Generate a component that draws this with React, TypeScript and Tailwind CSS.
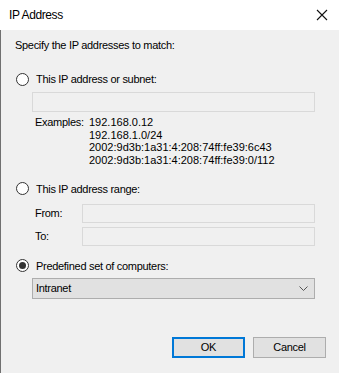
import React from 'react';

const Radio: React.FC<{ checked?: boolean }> = ({ checked }) => (
    <span className="w-[13px] h-[13px] rounded-full border border-[#333333] bg-white flex items-center justify-center shrink-0">
        {checked && <span className="w-[7px] h-[7px] rounded-full bg-[#333333]" />}
    </span>
);

const App: React.FC = () => {
    return (
        <div className="w-[339px] h-[373px] flex flex-col bg-white text-[11px] text-black font-['Liberation_Sans',Arial,sans-serif] overflow-hidden">
            <div className="h-[30px] flex items-center justify-between pl-[9px] pr-[10px] bg-white shrink-0">
                <span className="leading-none text-[12px] tracking-[-0.4px]">IP Address</span>
                <svg width="12" height="12" viewBox="0 0 12 12" className="mr-[1px]">
                    <path d="M1 1 L11 11 M11 1 L1 11" stroke="#111111" strokeWidth="1.1" />
                </svg>
            </div>
            <div className="flex-1 bg-[#f0f0f0] border-l border-[#707070] flex flex-col pl-[14px] pr-[24px] tracking-[-0.3px]">
                <div className="h-[14px] mt-[8px] flex items-center">Specify the IP addresses to match:</div>

                <div className="h-[14px] mt-[20px] flex items-center gap-[7px] ml-[1px]">
                    <Radio />
                    <span>This IP address or subnet:</span>
                </div>
                <div className="ml-[17px] mt-[6px] h-[20px] border border-[#d9d9d9] bg-[#f0f0f0]" />
                <div className="ml-[20px] mt-[4px] flex leading-[12.7px]">
                    <span className="w-[54px] shrink-0 whitespace-nowrap">Examples:</span>
                    <div className="flex flex-col tracking-normal">
                        <span>192.168.0.12</span>
                        <span>192.168.1.0/24</span>
                        <span>2002:9d3b:1a31:4:208:74ff:fe39:6c43</span>
                        <span>2002:9d3b:1a31:4:208:74ff:fe39:0/112</span>
                    </div>
                </div>

                <div className="h-[14px] mt-[15px] flex items-center gap-[7px] ml-[1px]">
                    <Radio />
                    <span>This IP address range:</span>
                </div>
                <div className="ml-[20px] mt-[8px] flex items-center">
                    <span className="w-[47px]">From:</span>
                    <div className="flex-1 h-[19px] border border-[#d9d9d9] bg-[#f0f0f0]" />
                </div>
                <div className="ml-[20px] mt-[4px] flex items-center">
                    <span className="w-[47px]">To:</span>
                    <div className="flex-1 h-[19px] border border-[#d9d9d9] bg-[#f0f0f0]" />
                </div>

                <div className="h-[14px] mt-[13px] flex items-center gap-[7px] ml-[1px]">
                    <Radio checked />
                    <span>Predefined set of computers:</span>
                </div>
                <div className="ml-[17px] mt-[5px] h-[21px] border border-[#adadad] bg-[#e1e1e1] flex items-center justify-between pl-[3px] pr-[6px]">
                    <span>Intranet</span>
                    <svg width="9" height="5" viewBox="0 0 9 5">
                        <path d="M0.5 0.5 L4.5 4.5 L8.5 0.5" stroke="#555555" strokeWidth="1" fill="none" />
                    </svg>
                </div>

                <div className="flex justify-end gap-[8px] mt-[38px] -mr-[11px]">
                    <button className="w-[73px] h-[21px] border-2 border-[#0078d7] bg-[#e1e1e1] flex items-center justify-center">OK</button>
                    <button className="w-[73px] h-[21px] border border-[#adadad] bg-[#e1e1e1] flex items-center justify-center">Cancel</button>
                </div>
            </div>
        </div>
    );
};

export default App;
